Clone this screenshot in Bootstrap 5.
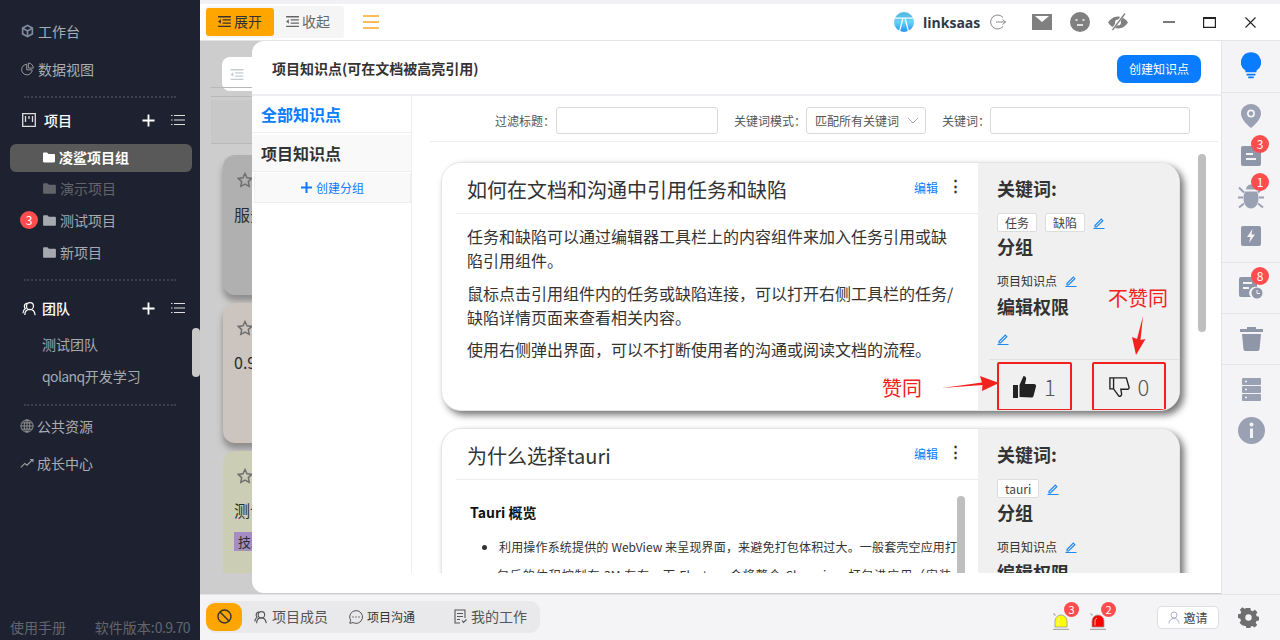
<!DOCTYPE html>
<html lang="zh">
<head>
  <meta charset="UTF-8">
  <meta name="viewport" content="width=device-width, initial-scale=1">
  <title>linksaas</title>
  <link href="https://cdn.jsdelivr.net/npm/bootstrap@5.3.3/dist/css/bootstrap.min.css" rel="stylesheet">
  <style>
    html, body { height: 640px; overflow: hidden; }
    body { font-family: "Noto Sans CJK SC", "Liberation Sans", sans-serif; font-size: 14px; color: #2c2d2e; background: #fff; }
    .app-shell { width: 1280px; height: 640px; position: relative; overflow: hidden; }

    /* sidebar */
    .side-bar { width: 200px; height: 640px; background: #1e2230; color: #b3b3b3; flex: none; position: relative; padding-top: 12px; }
    .side-link { height: 38px; padding-left: 21px; gap: 4px; color: #a9adb4; }
    .side-link.is-first { margin-top: 1px; gap: 3px; padding-left: 20px; }
    .side-link.is-last { margin-top: -1px; gap: 3px; padding-left: 20px; }
    .side-sep { margin: 8px 24px 6px; border-top: 2px dotted #3c404b; }
    .side-sep.is-team { margin: 11px 24px 5px; }
    .side-sep.is-end { margin: 12px 24px 0; }
    .side-head { height: 32px; padding: 0 15px 0 22px; color: #fff; font-weight: 500; }
    .side-head.is-team { height: 44px; margin-bottom: -2px; }
    .side-head .head-name { margin-left: 5px; }
    .side-item { height: 32px; padding-left: 43px; gap: 4px; color: #a6a9af; position: relative; }
    .side-item.is-on { height: 28px; margin: 8px 8px 0 10px; padding: 0 0 2px 33px; background: #595959; border-radius: 6px; color: #fff; font-weight: 700; }
    .side-item.is-dim { color: #626469; }
    .side-team { height: 32px; padding-left: 42px; color: #a6a9af; }
    .side-foot { position: absolute; left: 10px; right: 10px; bottom: 2px; height: 22px; font-size: 14px; color: #62656c; }
    .latin-tight { letter-spacing: -.6px; }
    .side-thumb { position: absolute; left: 192px; top: 328px; width: 8px; height: 49px; background: #c8c8c8; border-radius: 4px; }
    .dot-badge { background: #ff4d4f; color: #fff; border-radius: 50%; width: 18px; height: 18px; font-size: 12px; line-height: 18px; text-align: center; }
    .side-item .dot-badge { position: absolute; left: 20px; top: 7px; }

    /* top bar */
    .top-strip { height: 4px; background: #f0f0f5; }
    .top-bar { height: 37px; border-bottom: 1px solid #e4e4e8; padding-left: 6px; background: #fff; }
    .fold-group { height: 32px; width: 138px; background: #f5f5f5; border-radius: 3px; margin-top: 2px; }
    .fold-btn { width: 68px; height: 28px; gap: 3px; padding-bottom: 2px; color: #666; font-size: 14px; border-radius: 3px; }
    .fold-btn.is-on { background: #ffa500; color: #333; }
    .menu-lines { margin-left: 19px; }
    .brand-name { font-family: "Open Sans", "Liberation Sans", sans-serif; font-weight: 700; font-size: 14px; color: #2e3a4a; margin-left: 9px; width: 67px; }
    .bar-mail { margin-left: 26px; }
    .bar-face, .bar-eye { margin-left: 18px; }
    .bar-min { margin-left: 35px; }
    .bar-max { margin-left: 28px; }
    .bar-close { margin: 0 24px 0 29px; }

    /* middle */
    .mid-area { height: 553px; }
    .back-pane { flex: 1; background: #cdcdcd; padding: 16px 0 0 23px; overflow: hidden; }
    .back-toggle { width: 60px; height: 34px; margin-left: -1px; background: #fff; border-radius: 8px; padding-left: 8px; color: #c6cbd6; }
    .back-line { margin: -4px 0 0 -12px; height: 10px; border-top: 1px solid #b8b8b8; border-bottom: 1px solid #b8b8b8; }
    .back-band { margin: 3px 0 11px -12px; height: 44px; background: #c8c8c8; border-bottom: 1px solid #b8b8b8; }
    .back-card { width: 200px; height: 140px; border-radius: 12px; padding: 17px 11px 0; margin-bottom: 8px; font-size: 16px; box-shadow: 0 6px 6px #8e8e8e; }
    .back-card svg { margin-left: 3px; display: block; }
    .back-card .back-text { margin-top: 14px; line-height: 24px; }
    .back-gray { background: #b0b0b0; }
    .back-rose { background: #cbc4bf; }
    .back-olive { background: #cbcdb5; height: 122px; border-radius: 12px 12px 0 0; box-shadow: none; margin: 0; }
    .back-tag { display: inline-block; margin-top: 10px; padding: 0 4px; height: 19px; line-height: 19px; background: #a68cc4; font-size: 13px; }
    .tool-rail { width: 59px; flex: none; background: #f4f4f7; border-left: 1px solid #e4e4e8; }
    .rail-block { border-bottom: 1px solid #e4e4e8; }
    .rail-top { height: 52px; padding-top: 11px; }
    .rail-tasks { height: 170px; padding-top: 11px; gap: 10px; }
    .rail-slim { height: 51px; }
    .rail-tail { padding-top: 13px; gap: 16px; }
    .rail-icon { position: relative; width: 28px; height: 28px; }
    .rail-icon .dot-badge { position: absolute; left: 14px; top: -7px; }
    .rail-doc { margin-top: 4px; }
    .rail-bug { margin-top: 3px; }
    .rail-bolt { margin-top: 8px; }

    /* drawer over the dimmed page */
    .know-drawer { position: absolute; left: 252px; top: 41px; width: 969px; height: 552px; background: #fff; border-radius: 12px 0 0 12px; overflow: hidden; }
    .drawer-head { height: 55px; padding: 2px 20px 0; border-bottom: 2px solid #eeeef2; }
    .drawer-title { font-size: 14px; font-weight: 700; color: #333; }
    .btn-make { background: #0a7cff; color: #fff; font-size: 12px; border: 0; border-radius: 8px; height: 28px; width: 84px; padding: 0; }
    .drawer-body { height: 477px; }
    .know-nav { width: 160px; flex: none; border-right: 1px solid #eee; }
    .nav-all { height: 37px; padding-left: 9px; color: #0a7cff; font-size: 16px; font-weight: 700; border-bottom: 1px solid #eee; }
    .nav-proj { height: 37px; margin-top: 2px; padding-left: 9px; font-size: 16px; font-weight: 700; background: #f9f9f9; border-bottom: 1px solid #eee; color: #333; }
    .nav-make { height: 30px; margin: 1px 0 0 2px; background: #f9f9f9; border: 1px solid #eee; border-top: 0; color: #0a7cff; font-size: 12px; gap: 4px; }
    .know-main { flex: 1; position: relative; overflow: hidden; }
    .filter-row { height: 46px; padding-top: 4px; margin: 0 3px 0 18px; border-bottom: 1px solid #eee; font-size: 12px; color: #555; }
    .filter-box { height: 27px; border: 1px solid #d9d9d9; border-radius: 3px; background: #fff; }
    .filter-label { margin-left: 16px; }
    .filter-label.is-first { margin-left: 65px; }
    .box-title { width: 162px; margin-left: 1px; }
    .box-mode { width: 120px; padding: 0 6px 0 8px; }
    .box-word { width: 200px; }
    .know-list { height: 432px; padding: 20px 0 0 29px; overflow: hidden; }
    .know-card { width: 739px; height: 249px; border: 1px solid #e5e5e5; border-radius: 20px; overflow: hidden; box-shadow: 4px 4px 7px #777; margin-bottom: 17px; background: #fff; }
    .know-left { flex: 1; min-width: 0; }
    .know-top { height: 51px; padding: 0 15px 0 11px; border-bottom: 1px solid #eee; margin-left: 14px; }
    .know-name { padding-top: 4px; font-size: 20px; color: #333; font-weight: 400; }
    .edit-link { color: #0a7cff; font-size: 12px; }
    .more-dots { margin-left: 10px; margin-top: -6px; font-size: 15px; line-height: 12px; font-weight: 700; }
    .know-text { padding: 10px 20px 0 25px; font-size: 16px; line-height: 24px; color: #333; }
    .know-text p { margin-bottom: 8.5px; }
    .know-right { width: 201px; flex: none; background: #f0f0f0; padding: 12px 0 0 19px; position: relative; }
    .attr-name { font-size: 18px; font-weight: 700; color: #333; line-height: 26px; }
    .attr-words { margin-top: 12px; }
    .attr-group { margin-top: 1px; }
    .attr-small { margin-top: 13px; font-size: 12px; color: #333; }
    .attr-perm { margin-top: 3px; }
    .attr-pen { margin-top: 14px; display: block; }
    .word-tag { background: #fff; border: 1px solid #ddd; font-size: 12px; padding: 0 7px; height: 19px; line-height: 17px; margin-right: 8px; border-radius: 2px; color: #444; }
    .vote-row { position: absolute; left: 11px; right: 0; top: 196px; height: 52px; border-top: 1px solid #e2e2e2; font-size: 22px; font-weight: 300; color: #555; }
    .vote-cell { position: absolute; top: 2px; height: 49px; gap: 8px; }
    .vote-up { left: 8px; width: 75px; }
    .vote-down { left: 103px; width: 74px; }
    .red-frame { border: 2.5px solid #f21f1f; border-radius: 2px; }
    .note-red { position: absolute; color: #f2231d; font-size: 20px; line-height: 24px; }
    .note-agree { left: 882px; top: 376px; }
    .note-disagree { left: 1108px; top: 286px; }
    .note-arrow { position: absolute; }
    .arrow-agree { left: 942px; top: 374px; }
    .arrow-disagree { left: 1130px; top: 316px; }
    .tauri-body { position: relative; height: 120px; padding: 22px 0 0 28px; font-size: 12px; color: #333; overflow: hidden; }
    .tauri-body h6 { font-size: 14px; line-height: 21px; font-weight: 700; color: #111; margin-bottom: 10px; }
    .tauri-line { line-height: 28px; white-space: nowrap; text-align: justify; text-align-last: justify; }
    .tauri-first { width: 458px; }
    .tauri-next { width: 454px; margin-left: 27px; }
    .bullet-dot { width: 5px; height: 5px; background: #333; border-radius: 50%; margin: 0 12px; flex: none; }
    .tauri-thumb { position: absolute; right: 13px; top: 16px; width: 8px; height: 120px; background: #bfbfbf; border-radius: 4px; }
    .list-thumb { position: absolute; left: 786px; top: 58px; width: 8px; height: 178px; background: #bfbfbf; border-radius: 4px; }

    /* bottom bar */
    .foot-bar { height: 46px; background: #f4f4f7; border-top: 1px solid #e4e4e8; padding: 0 0 2px 6px; }
    .foot-group { width: 334px; height: 32px; background: #e9e9ec; border-radius: 10px; font-size: 14px; color: #555; }
    .foot-stop { width: 36px; height: 28px; background: #ffa500; border-radius: 9px; }
    .foot-tab { gap: 4px; }
    .tab-members { margin-left: 12px; }
    .tab-chat { margin-left: 21px; font-size: 12px; color: #333; }
    .tab-work { margin-left: 39px; }
    .foot-alarm { position: absolute; top: 608px; }
    .alarm-yellow { left: 1052px; color: #ffff00; }
    .alarm-red { left: 1089px; color: #ff0000; }
    .foot-alarm .dot-badge { position: absolute; width: 15px; height: 15px; line-height: 15px; font-size: 11px; left: 12px; top: -6px; }
    .invite-btn { position: absolute; left: 1157px; top: 606px; width: 62px; height: 23px; background: #fff; border: 1px solid #dcdfe6; border-radius: 5px; font-size: 12px; color: #444; gap: 3px; }
    .gear-icon { left: 1238px; top: 607px; }
  </style>
</head>
<body>
<svg width="0" height="0" class="d-none">
  <symbol id="i-folder" viewBox="0 0 14 12"><path fill="currentColor" d="M0 1.500C0 .8.5.3 1.200.3h3.600L6.300 2h6.500c.7 0 1.200.5 1.200 1.200v7.300c0 .7-.5 1.200-1.200 1.200H1.200C.5 11.700 0 11.200 0 10.500z"/></symbol>
  <symbol id="i-plus" viewBox="0 0 14 14"><path fill="none" stroke="#fff" stroke-width="2" d="M7 .5v13M.5 7h13"/></symbol>
  <symbol id="i-list" viewBox="0 0 14 12"><path fill="none" stroke="#ddd" stroke-width="1.200" d="M3 1.500h11M3 6h11M3 10.500h11M0 1.500h1.500M0 6h1.500M0 10.500h1.500"/></symbol>
  <symbol id="i-people" viewBox="0 0 16 16"><g fill="none" stroke="currentColor" stroke-width="1.300"><circle cx="8.500" cy="5.500" r="3.700"/><path d="M3 15c0-4 2.500-6 5.500-6s5 2 5.500 6M6 2.200C3.800 2.500 2.500 4 2.500 5.700c0 1 .4 1.800 1.100 2.400C2 9.300 1 11 1 13"/></g></symbol>
  <symbol id="i-fold" viewBox="0 0 14 12"><path fill="currentColor" d="M0 0h14v1.500H0zM5 3.500h9V5H5zM5 7h9v1.500H5zM0 10.500h14V12H0zM3 3.500v5L0 6z"/></symbol>
  <symbol id="i-pen" viewBox="0 0 12 12"><path fill="none" stroke="#1e88f5" stroke-width="1.200" d="M2 8.500 8.300 2.200l1.500 1.500L3.500 10H2zM.5 11.500h11"/></symbol>
  <symbol id="i-star" viewBox="0 0 16 16"><path fill="none" stroke="#707070" stroke-width="1.500" d="m8 1.500 2 4.300 4.700.6-3.400 3.200.9 4.700L8 12l-4.200 2.300.9-4.700L1.300 6.400 6 5.800z"/></symbol>
  <symbol id="i-alarm" viewBox="0 0 18 20"><path fill="currentColor" stroke="#999" stroke-width=".8" d="M3 17V11a6 6 0 0 1 12 0v6z"/><path fill="none" stroke="#fff" stroke-opacity=".7" d="M6 15.500v-4.500A3.500 3.500 0 0 1 8 8"/><path fill="none" stroke="#aaa" stroke-width="1.300" d="M1 19.300h16M1.500 3.500l2 2"/></symbol>
</svg>

<div class="app-shell d-flex">
  <aside class="side-bar">
    <div class="side-link d-flex align-items-center">
      <svg width="13" height="14" viewBox="0 0 16 16"><path fill="#7f8c9d" d="M8 0l7 3.800v8.400L8 16l-7-3.800V3.800zM8 2.300 4 4.500l4 2.300 4-2.300zM3 6.200v4.700l4 2.200V8.500zm10 0L9 8.500v4.600l4-2.200z"/></svg>
      <span>工作台</span>
    </div>
    <div class="side-link d-flex align-items-center">
      <svg width="13" height="14" viewBox="0 0 16 16"><g fill="none" stroke="#9a9a9a" stroke-width="1.200"><path d="M7 2.200a6.500 6.500 0 1 0 6.800 6.800H7z"/><path d="M9 .7v6.100h6.200A6.300 6.300 0 0 0 9 .7z"/></g></svg>
      <span>数据视图</span>
    </div>
    <div class="side-sep"></div>
    <div class="side-head d-flex align-items-center">
      <svg width="14" height="14" viewBox="0 0 14 14"><path fill="none" stroke="#ddd" stroke-width="1.300" d="M.7.700h12.600v12.600H.700zM3.500 3v6M7 3v3M10.500 3v6"/></svg>
      <span class="head-name flex-grow-1 ms-2">项目</span>
      <svg width="13" height="13" class="me-3"><use href="#i-plus"/></svg>
      <svg width="14" height="12"><use href="#i-list"/></svg>
    </div>
    <div class="side-item is-on d-flex align-items-center"><svg width="12" height="11"><use href="#i-folder"/></svg><span>凌鲨项目组</span></div>
    <div class="side-item is-dim d-flex align-items-center"><svg width="13" height="11"><use href="#i-folder"/></svg><span>演示项目</span></div>
    <div class="side-item d-flex align-items-center"><span class="dot-badge">3</span><svg width="13" height="11"><use href="#i-folder"/></svg><span>测试项目</span></div>
    <div class="side-item d-flex align-items-center"><svg width="13" height="11"><use href="#i-folder"/></svg><span>新项目</span></div>
    <div class="side-sep is-team"></div>
    <div class="side-head is-team d-flex align-items-center">
      <svg width="15" height="15"><use href="#i-people"/></svg>
      <span class="head-name flex-grow-1">团队</span>
      <svg width="13" height="13" class="me-3"><use href="#i-plus"/></svg>
      <svg width="14" height="12"><use href="#i-list"/></svg>
    </div>
    <div class="side-team d-flex align-items-center">测试团队</div>
    <div class="side-team d-flex align-items-center"><span><span class="latin-tight">qolanq</span>开发学习</span></div>
    <div class="side-sep is-end"></div>
    <div class="side-link is-first d-flex align-items-center">
      <svg width="14" height="14" viewBox="0 0 16 16"><g fill="none" stroke="#9c9c9c" stroke-width="1"><circle cx="8" cy="8" r="7"/><ellipse cx="8" cy="8" rx="3.200" ry="7"/><path d="M1 8h14M2 4.500h12M2 11.500h12M8 1v14"/></g></svg>
      <span>公共资源</span>
    </div>
    <div class="side-link is-last d-flex align-items-center">
      <svg width="14" height="14" viewBox="0 0 16 16"><path fill="none" stroke="#9c9c9c" stroke-width="1.300" d="M1 13l4.500-4.500 2.500 2L14.500 4M11.500 4h3.300v3"/></svg>
      <span>成长中心</span>
    </div>
    <div class="side-foot d-flex justify-content-between align-items-center"><span>使用手册</span><span>软件版本:<span class="latin-tight">0.9.70</span></span></div>
    <div class="side-thumb"></div>
  </aside>

  <div class="flex-grow-1 d-flex flex-column">
    <div class="top-strip"></div>
    <header class="top-bar d-flex">
      <div class="fold-group d-flex align-items-center">
        <div class="fold-btn is-on d-flex align-items-center justify-content-center"><svg width="13" height="11"><use href="#i-fold"/></svg>展开</div>
        <div class="fold-btn d-flex align-items-center justify-content-center"><svg width="13" height="11"><use href="#i-fold"/></svg>收起</div>
      </div>
      <svg width="16" height="14" viewBox="0 0 16 14" class="align-self-center menu-lines"><path stroke="#ffa726" stroke-width="1.600" d="M0 1h16M0 7h16M0 13h16"/></svg>
      <div class="flex-grow-1"></div>
      <div class="d-flex align-items-center">
        <svg width="20" height="20" viewBox="0 0 20 20"><defs><linearGradient id="lg" x1="0" y1="0" x2="0" y2="1"><stop offset="0" stop-color="#4fb3d9"/><stop offset=".5" stop-color="#66d4fa"/><stop offset="1" stop-color="#1e90f5"/></linearGradient></defs><circle cx="10" cy="10" r="10" fill="url(#lg)"/><path fill="#fff" d="M1 5.500h18v1.200H1z"/><path stroke="#fff" stroke-width="1.200" fill="none" d="M9 6 5.500 19.500M11 6l3.500 13.500"/></svg>
        <span class="brand-name">linksaas</span>
        <svg width="16" height="16" viewBox="0 0 16 16"><path fill="none" stroke="#8a8a8a" stroke-width="1" d="M13 3.500A7 7 0 1 0 13 12.500M6 8h9.500M12.500 5.500 15.500 8l-3 2.500"/></svg>
        <svg width="20" height="16" viewBox="0 0 20 16" class="bar-mail"><path fill="#808080" d="M0 0h20v16H0z"/><path fill="#fff" d="M3 2h14l-7 6z"/></svg>
        <svg width="20" height="20" viewBox="0 0 20 20" class="bar-face"><circle cx="10" cy="10" r="10" fill="#808080"/><path stroke="#fff" stroke-width="1.500" d="M5.500 8h2M12.500 8h2M7 13h6"/></svg>
        <svg width="20" height="18" viewBox="0 0 20 18" class="bar-eye"><path fill="#808080" d="M10 3.500C5.500 3.500 2 6.500 0 9.500c2 3 5.500 6 10 6s8-3 10-6c-2-3-5.500-6-10-6z"/><circle cx="10" cy="9.500" r="3" fill="#fff"/><path stroke="#fff" stroke-width="2.600" d="M16.500.5 4 17"/><path stroke="#808080" stroke-width="1.300" d="M17 .5 4.500 17"/></svg>
        <svg width="12" height="2" viewBox="0 0 12 2" class="bar-min"><path stroke="#222" stroke-width="1.200" d="M0 1h12"/></svg>
        <svg width="13" height="11" viewBox="0 0 13 11" class="bar-max"><path fill="none" stroke="#222" stroke-width="1.200" d="M.6.600h11.800v9.800H.600zM.6 1.500h11.800"/></svg>
        <svg width="11" height="11" viewBox="0 0 11 11" class="bar-close"><path stroke="#222" stroke-width="1.100" d="M.5.500l10 10M10.500.500l-10 10"/></svg>
      </div>
    </header>

    <div class="mid-area d-flex">
      <div class="back-pane">
        <div class="back-toggle d-flex align-items-center"><svg width="14" height="11"><use href="#i-fold"/></svg></div>
        <div class="back-line"></div>
        <div class="back-band"></div>
        <div class="back-card back-gray"><svg width="16" height="16"><use href="#i-star"/></svg><div class="back-text">服务</div></div>
        <div class="back-card back-rose"><svg width="16" height="16"><use href="#i-star"/></svg><div class="back-text">0.9</div></div>
        <div class="back-card back-olive"><svg width="16" height="16"><use href="#i-star"/></svg><div class="back-text">测试</div><span class="back-tag">技术</span></div>
      </div>
      <div class="tool-rail">
        <div class="rail-block rail-top d-flex justify-content-center">
          <svg width="20" height="27" viewBox="0 0 18 24"><path fill="#0a7cff" d="M9 0a9 9 0 0 1 5 16.500V18H4v-1.500A9 9 0 0 1 9 0zM5 19.500h8V21H5zM6.500 22h5v1.500h-5z"/></svg>
        </div>
        <div class="rail-block rail-tasks d-flex flex-column align-items-center">
          <div class="rail-icon d-flex justify-content-center"><svg width="20" height="24" viewBox="0 0 20 24"><path fill="#9aa1b2" fill-rule="evenodd" d="M10 0c5.500 0 10 4.300 10 9.500 0 5-5 10.500-10 14.500C5 20 0 14.500 0 9.500 0 4.300 4.500 0 10 0zm0 5.500a4 4 0 1 0 0 8 4 4 0 0 0 0-8z"/><circle cx="10" cy="9.500" r="2.200" fill="#9aa1b2"/></svg></div>
          <div class="rail-icon d-flex justify-content-center"><svg width="20" height="20" viewBox="0 0 20 20" class="rail-doc"><path fill="#8e96a8" d="M2 0h16a2 2 0 0 1 2 2v16a2 2 0 0 1-2 2H2a2 2 0 0 1-2-2V2a2 2 0 0 1 2-2z"/><path stroke="#f4f4f7" stroke-width="2" d="M5 8h7M5 13h10"/></svg><span class="dot-badge">3</span></div>
          <div class="rail-icon d-flex justify-content-center"><svg width="26" height="27" viewBox="0 0 26 26" class="rail-bug"><path fill="#9aa1b2" d="M8 6a5 5 0 0 1 10 0zM7 8h12c1 2 1.500 4 1.500 7 0 6-3.500 10-7.500 10S5.500 21 5.500 15c0-3 .5-5 1.500-7z"/><path stroke="#9aa1b2" stroke-width="2" d="M1 4l5 5M25 4l-5 5M0 14h5M26 14h-5M1 24l5-4M25 24l-5-4"/></svg><span class="dot-badge">1</span></div>
          <div class="rail-icon d-flex justify-content-center"><svg width="20" height="20" viewBox="0 0 20 20" class="rail-bolt"><rect width="20" height="20" rx="2" fill="#8e96a8"/><path fill="#f4f4f7" d="M11.500 3 6 11h3.500L8 17l6-8.500h-3.500z"/></svg></div>
        </div>
        <div class="rail-block rail-slim d-flex justify-content-center align-items-center">
          <div class="rail-icon d-flex justify-content-center align-items-center"><svg width="24" height="22" viewBox="0 0 24 22"><path fill="#8e96a8" d="M2 0h14a2 2 0 0 1 2 2v8a6 6 0 0 0-6 10H2a2 2 0 0 1-2-2V2a2 2 0 0 1 2-2z"/><path stroke="#f4f4f7" stroke-width="1.800" d="M4 6h9M4 11h6"/><circle cx="18" cy="16" r="5.500" fill="#8e96a8"/><path stroke="#f4f4f7" fill="none" d="M18 13v3.500h3"/></svg><span class="dot-badge">8</span></div>
        </div>
        <div class="rail-block rail-slim d-flex justify-content-center align-items-center">
          <svg width="23" height="24" viewBox="0 0 23 24"><path fill="#8e96a8" d="M7 0h9v2h7v3H0V2h7zM2 7h19l-1.500 15.500A2 2 0 0 1 17.500 24h-12a2 2 0 0 1-2-1.500z"/></svg>
        </div>
        <div class="rail-tail d-flex flex-column align-items-center">
          <svg width="19" height="23" viewBox="0 0 19 23"><path fill="#9aa1b2" d="M1 0h17a1 1 0 0 1 1 1v5a1 1 0 0 1-1 1H1a1 1 0 0 1-1-1V1a1 1 0 0 1 1-1zM1 8h17a1 1 0 0 1 1 1v5a1 1 0 0 1-1 1H1a1 1 0 0 1-1-1V9a1 1 0 0 1 1-1zM1 16h17a1 1 0 0 1 1 1v5a1 1 0 0 1-1 1H1a1 1 0 0 1-1-1v-5a1 1 0 0 1 1-1z"/><path stroke="#f4f4f7" stroke-width="1.500" d="M3 3.500h2M3 11.500h2M3 19.500h2"/></svg>
          <svg width="27" height="27" viewBox="0 0 27 27"><circle cx="13.500" cy="13.500" r="13.500" fill="#9aa1b2"/><circle cx="13.500" cy="7.500" r="2" fill="#f4f4f7"/><path stroke="#f4f4f7" stroke-width="3" d="M13.500 11.500V21"/></svg>
        </div>
      </div>
    </div>

    <footer class="foot-bar d-flex align-items-center">
      <div class="foot-group d-flex align-items-center">
        <div class="foot-stop d-flex align-items-center justify-content-center"><svg width="15" height="15" viewBox="0 0 15 15"><g fill="none" stroke="#333" stroke-width="1.400"><circle cx="7.500" cy="7.500" r="6.500"/><path d="M3 3l9 9"/></g></svg></div>
        <div class="foot-tab tab-members d-flex align-items-center"><svg width="14" height="14"><use href="#i-people"/></svg>项目成员</div>
        <div class="foot-tab tab-chat d-flex align-items-center"><svg width="14" height="14" viewBox="0 0 14 14"><g fill="none" stroke="#555" stroke-width="1"><path d="M7 .6a6.400 6.400 0 1 1-3 12L.8 13.300l.8-3A6.400 6.400 0 0 1 7 .6z"/></g><path stroke="#555" stroke-width="1.500" d="M3.500 7h1M6.500 7h1M9.500 7h1"/></svg>项目沟通</div>
        <div class="foot-tab tab-work d-flex align-items-center"><svg width="13" height="15" viewBox="0 0 13 15"><path fill="none" stroke="#555" stroke-width="1.100" d="M6 14H1V1h10v8M3 4.500h6M3 7.500h6M3 10.500h3M8 11.500l1.500 2 3-3"/></svg>我的工作</div>
      </div>
    </footer>
  </div>

  <!-- drawer -->
  <div class="know-drawer d-flex flex-column">
    <div class="drawer-head d-flex align-items-center justify-content-between">
      <div class="drawer-title">项目知识点(可在文档被高亮引用)</div>
      <button class="btn btn-make" type="button">创建知识点</button>
    </div>
    <div class="drawer-body d-flex">
      <div class="know-nav">
        <div class="nav-all d-flex align-items-center">全部知识点</div>
        <div class="nav-proj d-flex align-items-center">项目知识点</div>
        <div class="nav-make d-flex align-items-center justify-content-center"><svg width="11" height="11" viewBox="0 0 11 11"><path stroke="#0a7cff" stroke-width="2" d="M5.500 0v11M0 5.500h11"/></svg>创建分组</div>
      </div>
      <div class="know-main">
        <div class="filter-row d-flex align-items-center">
          <span class="filter-label is-first">过滤标题：</span>
          <div class="filter-box box-title"></div>
          <span class="filter-label">关键词模式：</span>
          <div class="filter-box box-mode d-flex align-items-center justify-content-between"><span>匹配所有关键词</span><svg width="12" height="7" viewBox="0 0 12 7"><path fill="none" stroke="#aaa" d="M1 1l5 5 5-5"/></svg></div>
          <span class="filter-label">关键词：</span>
          <div class="filter-box box-word"></div>
        </div>
        <div class="know-list">
          <div class="know-card d-flex">
            <div class="know-left">
              <div class="know-top d-flex align-items-center">
                <div class="know-name flex-grow-1">如何在文档和沟通中引用任务和缺陷</div>
                <span class="edit-link">编辑</span><span class="more-dots">⋮</span>
              </div>
              <div class="know-text">
                <p>任务和缺陷可以通过编辑器工具栏上的内容组件来加入任务引用或缺陷引用组件。</p>
                <p>鼠标点击引用组件内的任务或缺陷连接，可以打开右侧工具栏的任务/缺陷详情页面来查看相关内容。</p>
                <p>使用右侧弹出界面，可以不打断使用者的沟通或阅读文档的流程。</p>
              </div>
            </div>
            <div class="know-right">
              <div class="attr-name">关键词:</div>
              <div class="attr-words d-flex align-items-center"><span class="word-tag">任务</span><span class="word-tag">缺陷</span><svg width="12" height="12"><use href="#i-pen"/></svg></div>
              <div class="attr-name attr-group">分组</div>
              <div class="attr-small d-flex align-items-center">项目知识点<svg width="12" height="12" class="ms-2"><use href="#i-pen"/></svg></div>
              <div class="attr-name attr-perm">编辑权限</div>
              <svg width="12" height="12" class="attr-pen"><use href="#i-pen"/></svg>
              <div class="vote-row">
                <div class="vote-cell vote-up red-frame d-flex align-items-center justify-content-center">
                  <svg width="23" height="22" viewBox="0 0 23 22"><path fill="#222" d="M0 9h5v13H0zM6.500 21V9l4-9c2 0 3 1.500 2.500 3.500L12 8h9a2 2 0 0 1 2 2.500l-2.500 9.500a2 2 0 0 1-2 1.500z"/></svg><span>1</span>
                </div>
                <div class="vote-cell vote-down red-frame d-flex align-items-center justify-content-center">
                  <svg width="21" height="22" viewBox="0 0 23 22"><path fill="none" stroke="#222" stroke-width="1.500" d="M1 1h4v12H1zM5 1h14l3 10.500c.2 1-.5 2-1.500 2H13l.8 5c.2 2-1.500 3-3 2.500L5 13z"/></svg><span>0</span>
                </div>
              </div>
            </div>
          </div>
          <div class="know-card d-flex">
            <div class="know-left">
              <div class="know-top d-flex align-items-center">
                <div class="know-name flex-grow-1">为什么选择tauri</div>
                <span class="edit-link">编辑</span><span class="more-dots">⋮</span>
              </div>
              <div class="tauri-body">
                <h6>Tauri 概览</h6>
                <div class="d-flex align-items-center"><span class="bullet-dot"></span><div class="tauri-line tauri-first">利用操作系统提供的 WebView 来呈现界面，来避免打包体积过大。一般套壳空应用打</div></div>
                <div class="tauri-line tauri-next">包后的体积控制在 3M 左右，而 Electron 会将整个 Chromium 打包进应用（安装</div>
                <div class="tauri-thumb"></div>
              </div>
            </div>
            <div class="know-right">
              <div class="attr-name">关键词:</div>
              <div class="attr-words d-flex align-items-center"><span class="word-tag">tauri</span><svg width="12" height="12"><use href="#i-pen"/></svg></div>
              <div class="attr-name attr-group">分组</div>
              <div class="attr-small d-flex align-items-center">项目知识点<svg width="12" height="12" class="ms-2"><use href="#i-pen"/></svg></div>
              <div class="attr-name attr-perm">编辑权限</div>
            </div>
          </div>
        </div>
        <div class="list-thumb"></div>
      </div>
    </div>
  </div>

  <!-- annotations drawn onto the screenshot -->
  <div class="note-red note-agree">赞同</div>
  <div class="note-red note-disagree">不赞同</div>
  <svg class="note-arrow arrow-agree" width="58" height="18" viewBox="0 0 58 18"><path fill="#f2231d" d="M0 14 40 8.500 38 2 57 9 40 17 40.500 11z"/></svg>
  <svg class="note-arrow arrow-disagree" width="16" height="40" viewBox="0 0 16 40"><path fill="#f2231d" d="M13 0 10.500 24l5 -1L6 39 2 21l5 2z"/></svg>

  <!-- bottom right -->
  <div class="foot-alarm alarm-yellow"><svg width="18" height="20"><use href="#i-alarm"/></svg><span class="dot-badge">3</span></div>
  <div class="foot-alarm alarm-red"><svg width="18" height="20"><use href="#i-alarm"/></svg><span class="dot-badge">2</span></div>
  <div class="invite-btn d-flex align-items-center justify-content-center"><svg width="12" height="13" viewBox="0 0 12 13"><g fill="none" stroke="#aab0c6"><circle cx="6" cy="4" r="3"/><path d="M1 12.500c0-3 2-5 5-5s5 2 5 5"/></g></svg>邀请</div>
  <svg class="note-arrow gear-icon" width="21" height="21" viewBox="-1 -1 23 23"><path fill="#6e6e6e" fill-rule="evenodd" d="M8.500 0h4l.6 2.800 2 .8L17.500 2l2.800 2.800-1.600 2.400.8 2 2.500.5v4l-2.800.6-.8 2 1.600 2.400-2.800 2.800-2.400-1.600-2 .8-.5 2.300h-4l-.6-2.800-2-.8L3.500 19 .7 16.200l1.600-2.400-.8-2L-1 11V7l2.800-.6.800-2L1 2l2.800-2.800 2.400 1.600 2-.8zM10.500 7a3.500 3.500 0 1 0 0 7 3.500 3.500 0 0 0 0-7z"/></svg>
</div>

<script src="https://cdn.jsdelivr.net/npm/bootstrap@5.3.3/dist/js/bootstrap.bundle.min.js"></script>
</body>
</html>
